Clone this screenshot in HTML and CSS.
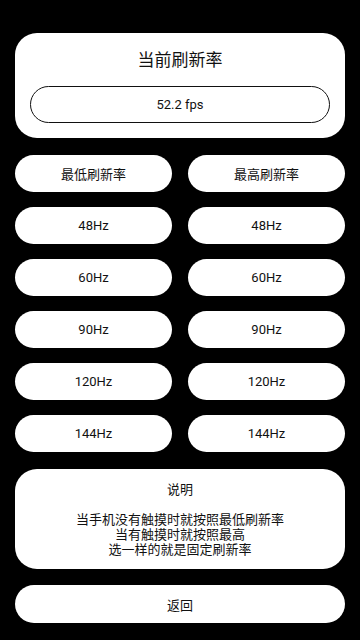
FILE: index.html
```html
<!DOCTYPE html>
<html lang="zh-CN">
<head>
    <meta charset="UTF-8">
    <meta name="viewport" content="width=device-width, initial-scale=1.0">
    <title>刷新率</title>
    <link rel="stylesheet" href="styles.css">
</head>
<body>
    <div class="container">
        <div class="card current-card">
            <div class="card-title">当前刷新率</div>
            <div class="fps-box" id="fps">52.2 fps</div>
        </div>

        <div class="rate-grid">
            <button class="pill">最低刷新率</button>
            <button class="pill">最高刷新率</button>
            <button class="pill">48Hz</button>
            <button class="pill">48Hz</button>
            <button class="pill">60Hz</button>
            <button class="pill">60Hz</button>
            <button class="pill">90Hz</button>
            <button class="pill">90Hz</button>
            <button class="pill">120Hz</button>
            <button class="pill">120Hz</button>
            <button class="pill">144Hz</button>
            <button class="pill">144Hz</button>
        </div>

        <div class="card info-card">
            <div class="info-title">说明</div>
            <div class="info-text">当手机没有触摸时就按照最低刷新率<br>当有触摸时就按照最高<br>选一样的就是固定刷新率</div>
        </div>

        <button class="pill back-button">返回</button>
    </div>
</body>
</html>
```

FILE: styles.css
```css
body {
    font-family: Roboto, "Noto Sans CJK SC", sans-serif;
    background-color: #000;
    color: #111;
    margin: 0;
    padding: 0;
}

.container {
    display: flex;
    flex-direction: column;
    padding: 33px 15px 0;
}

.card {
    background-color: #fff;
    border-radius: 22px;
}

.current-card {
    padding: 15px 15px 15px;
    display: flex;
    flex-direction: column;
    align-items: stretch;
}

.card-title {
    font-size: 17px;
    line-height: 24px;
    text-align: center;
    margin-bottom: 14px;
}

.fps-box {
    height: 35px;
    border: 1px solid #111;
    border-radius: 19px;
    font-size: 13px;
    display: flex;
    align-items: center;
    justify-content: center;
}

.rate-grid {
    display: grid;
    grid-template-columns: 1fr 1fr;
    column-gap: 16px;
    row-gap: 15px;
    margin-top: 17px;
}

.pill {
    height: 37px;
    background-color: #fff;
    border: none;
    border-radius: 19px;
    font-family: Roboto, "Noto Sans CJK SC", sans-serif;
    font-size: 13px;
    color: #111;
    padding: 0;
}

.info-card {
    margin-top: 17px;
    padding: 13px 15px 12px;
    text-align: center;
    font-size: 13px;
    line-height: 15px;
}

.info-title {
    margin-bottom: 15px;
}

.back-button {
    margin-top: 16px;
    height: 38px;
}
```
